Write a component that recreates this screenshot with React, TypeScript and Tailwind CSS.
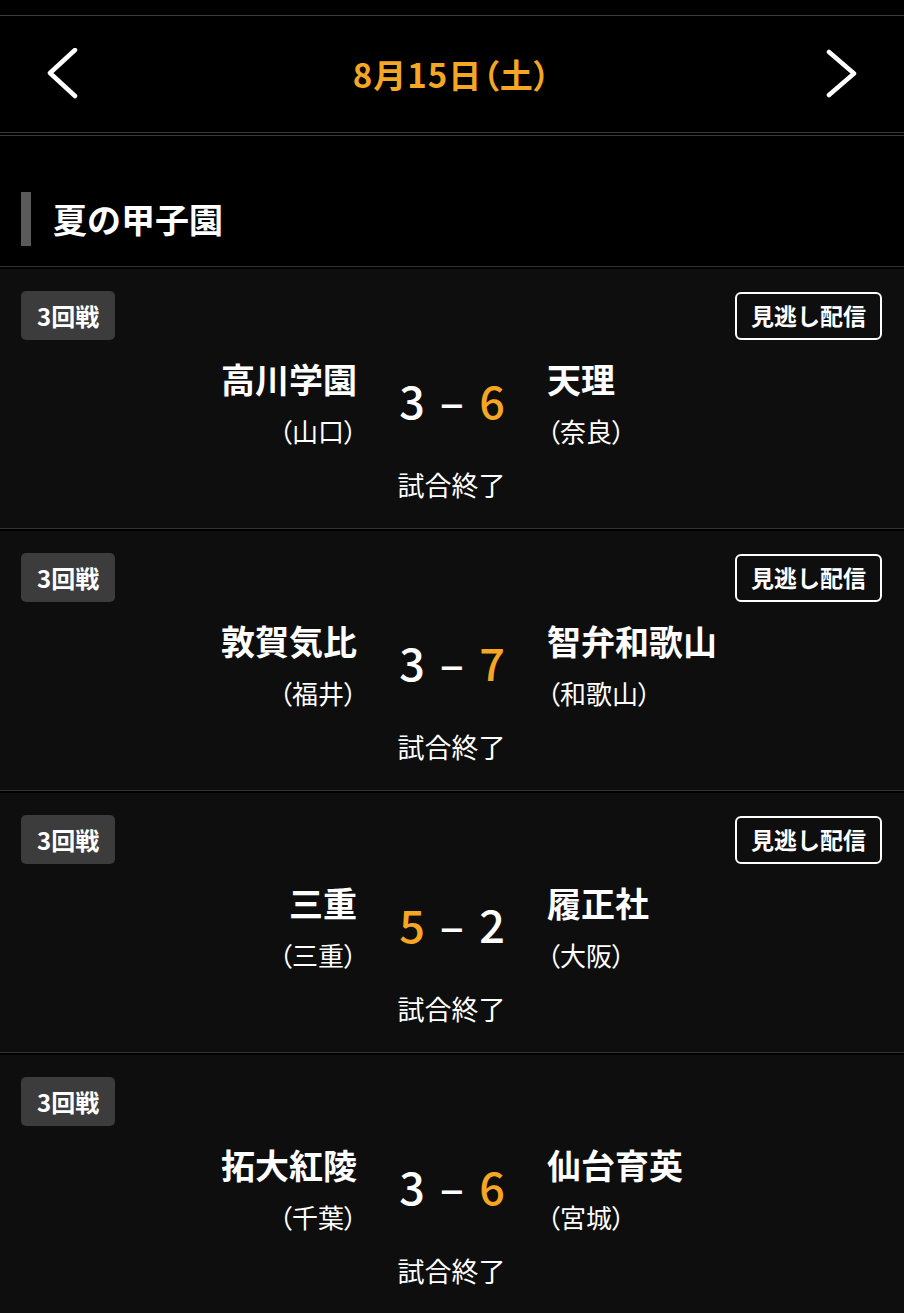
import React from "react";

type Game = {
  home: string;
  homePref: string;
  away: string;
  awayPref: string;
  hs: number;
  as: number;
  replay: boolean;
};

const games: Game[] = [
  { home: "高川学園", homePref: "（山口）", away: "天理", awayPref: "（奈良）", hs: 3, as: 6, replay: true },
  { home: "敦賀気比", homePref: "（福井）", away: "智弁和歌山", awayPref: "（和歌山）", hs: 3, as: 7, replay: true },
  { home: "三重", homePref: "（三重）", away: "履正社", awayPref: "（大阪）", hs: 5, as: 2, replay: true },
  { home: "拓大紅陵", homePref: "（千葉）", away: "仙台育英", awayPref: "（宮城）", hs: 3, as: 6, replay: false },
];

function Card({ g }: { g: Game }) {
  const homeWin = g.hs > g.as;
  return (
    <div className="border-t border-[#333333] pt-[2px] bg-black">
      <div className="bg-[#0e0e0e] pl-[21px] pr-[22px] pt-[22px] pb-[28px]">
        <div className="flex items-center justify-between h-[49px]">
          <div className="h-[49px] px-[16px] flex items-center rounded-[5px] bg-[#3c3c3c] text-white text-[24px] font-bold leading-none">
            3回戦
          </div>
          {g.replay && (
            <div className="h-[48px] px-[14px] flex items-center rounded-[6px] border-2 border-white text-white text-[23px] font-bold leading-none">
              見逃し配信
            </div>
          )}
        </div>
        <div className="-ml-[21px] -mr-[22px] grid grid-cols-[1fr_190px_1fr] items-center mt-[19px]">
          <div className="flex flex-col items-end text-white">
            <div className="text-[34px] font-bold leading-[40px]">{g.home}</div>
            <div className="text-[26px] leading-[28px] mt-[18px] [font-feature-settings:'palt']">{g.homePref}</div>
          </div>
          <div className="flex justify-center items-center text-[45px] font-medium leading-none pb-[6px]">
            <span className={`w-[40px] text-center ${homeWin ? "text-[#f5a623]" : "text-white"}`}>{g.hs}</span>
            <span className="w-[40px] text-center text-white">–</span>
            <span className={`w-[40px] text-center ${!homeWin ? "text-[#f5a623]" : "text-white"}`}>{g.as}</span>
          </div>
          <div className="flex flex-col items-start text-white">
            <div className="text-[34px] font-bold leading-[40px]">{g.away}</div>
            <div className="text-[26px] leading-[28px] mt-[18px] [font-feature-settings:'palt']">{g.awayPref}</div>
          </div>
        </div>
        <div className="mt-[25px] text-center text-white text-[27px] leading-[30px]">試合終了</div>
      </div>
    </div>
  );
}

export default function App() {
  return (
    <div
      className="min-h-screen bg-black text-white"
      style={{ fontFamily: '"Noto Sans CJK JP", "Noto Sans", sans-serif' }}
    >
      <div className="h-[15px]" />
      <div className="border-t border-b border-[#3a3a3a] h-[118px] flex items-center justify-between pl-[46px] pr-[46px]">
        <svg width="32" height="52" viewBox="0 0 32 52" fill="none">
          <polyline points="29,2 4,25 29,48" stroke="white" strokeWidth="4.5" strokeLinecap="round" strokeLinejoin="round" />
        </svg>
        <div className="text-[33px] font-semibold text-[#f5a623] leading-none tracking-[1px] [font-feature-settings:'palt']">
          8月15日（土）
        </div>
        <svg width="32" height="52" viewBox="0 0 32 52" fill="none">
          <polyline points="3,4 28,25.5 3,47" stroke="white" strokeWidth="4.5" strokeLinecap="round" strokeLinejoin="round" />
        </svg>
      </div>
      <div className="h-[2px]" />
      <div className="border-t border-[#3a3a3a] pt-[56px] pb-[20px]">
        <div className="flex items-center h-[54px] pl-[21px]">
          <div className="w-[10px] h-[54px] bg-[#5a5a5a]" />
          <div className="ml-[22px] text-[34px] font-bold leading-none">夏の甲子園</div>
        </div>
      </div>
      {games.map((g, i) => (
        <Card key={i} g={g} />
      ))}
    </div>
  );
}
